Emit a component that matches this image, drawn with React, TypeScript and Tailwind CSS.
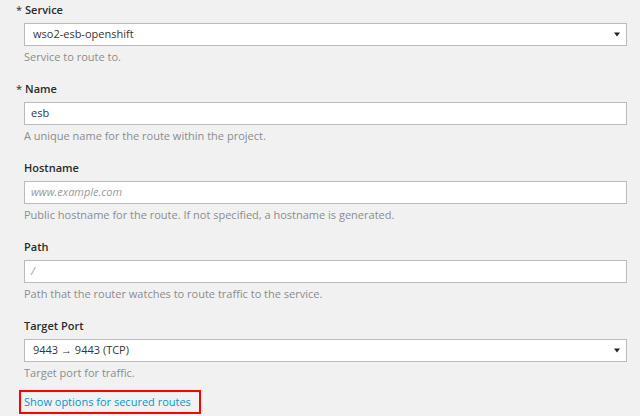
const Caret = () => (
  <svg width="6" height="5" viewBox="0 0 6 5" className="absolute right-[6px] top-[8px]">
    <path d="M0 0.5 H6 L3 4.5 Z" fill="#222" />
  </svg>
);

type Field = {
  label: string;
  required?: boolean;
  kind: 'select' | 'input';
  value?: string;
  placeholder?: string;
  help: string;
};

const fields: Field[] = [
  { label: 'Service', required: true, kind: 'select', value: 'wso2-esb-openshift', help: 'Service to route to.' },
  { label: 'Name', required: true, kind: 'input', value: 'esb', help: 'A unique name for the route within the project.' },
  {
    label: 'Hostname',
    kind: 'input',
    placeholder: 'www.example.com',
    help: 'Public hostname for the route. If not specified, a hostname is generated.',
  },
  { label: 'Path', kind: 'input', placeholder: '/', help: 'Path that the router watches to route traffic to the service.' },
  { label: 'Target Port', kind: 'select', value: '9443 \u2192 9443 (TCP)', help: 'Target port for traffic.' },
];

export default function App() {
  return (
    <div
      className="w-[640px] h-[416px] overflow-hidden bg-[#f1f1f1] text-[11px] text-[#363636]"
      style={{ fontFamily: '"Open Sans", "Liberation Sans", sans-serif' }}
    >
      <div className="pl-[24px] pr-[13px] pt-[1px]">
        {fields.map((f) => (
          <div key={f.label} className="mb-[14px]">
            <div className="h-[18px] leading-[18px] font-semibold text-[#2b2b2b] mb-[4px]">
              {f.required && <span className="-ml-[8px] mr-[3px] font-normal">*</span>}
              {f.label}
            </div>
            <div className="relative h-[23px] bg-white border border-[#bbbbbb] flex items-center">
              {f.value ? (
                <span className={f.kind === 'select' ? 'pl-[8px]' : 'pl-[6px]'}>{f.value}</span>
              ) : (
                <span className="pl-[6px] italic text-[#999999]">{f.placeholder}</span>
              )}
              {f.kind === 'select' && <Caret />}
            </div>
            <div className="h-[18px] leading-[18px] mt-[2px] text-[#8b8d8f]">{f.help}</div>
          </div>
        ))}
        <div className="-ml-[5px] mt-[-6px] w-[182px] h-[24px] border-2 border-[#ff0000] pl-[3px] leading-[20px] whitespace-nowrap text-[#0099d3]">
          Show options for secured routes
        </div>
      </div>
    </div>
  );
}
